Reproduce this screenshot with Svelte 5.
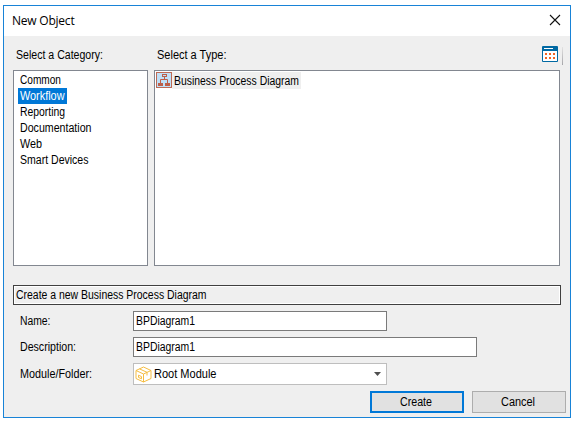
<script>
  const categories = [
    { name: 'Common', width: 41 },
    { name: 'Workflow', width: 44.5 },
    { name: 'Reporting', width: 45 },
    { name: 'Documentation', width: 71.5 },
    { name: 'Web', width: 22 },
    { name: 'Smart Devices', width: 68.5 }
  ];
  let selected = $state('Workflow');
</script>

{#snippet label(text, width)}
  <svg class="label" width={Math.ceil(width)} height="16">
    <text x="0" y="12" textLength={width} lengthAdjust="spacingAndGlyphs">{text}</text>
  </svg>
{/snippet}

<main>
  <div class="dialog">
    <header>
      <h1>New Object</h1>
      <svg class="close" width="12" height="12" viewBox="0 0 12 12">
        <path d="M1 1 11 11M11 1 1 11" stroke="#111" stroke-width="1.1" fill="none" />
      </svg>
    </header>

    <div class="toolbar">
      <div class="cat-label">{@render label('Select a Category:', 87)}</div>
      <div class="type-label">{@render label('Select a Type:', 69.5)}</div>
      <svg class="view" width="16" height="16" viewBox="0 0 16 16">
        <rect width="16" height="16" rx="1" fill="#0069a3" />
        <rect x="2" y="2" width="9" height="1" fill="#fff" />
        <rect x="1" y="5" width="14" height="10" fill="#fff" />
        <path d="M3 7h2v2H3zM7 7h2v2H7zM11 7h2v2h-2zM3 11h2v2H3zM7 11h2v2H7zM11 11h2v2h-2z" fill="#f26322" />
      </svg>
      <i class="divider"></i>
    </div>

    <div class="lists">
      <ul class="categories">
        {#each categories as c}
          <li class:selected={c.name === selected}>{@render label(c.name, c.width)}</li>
        {/each}
      </ul>
      <div class="types">
        <div class="type">
          <svg width="16" height="16" viewBox="0 0 16 16">
            <rect x=".5" y=".5" width="15" height="15" fill="#c0e0f7" stroke="#bd6a55" />
            <g fill="none" stroke="#bd5f49">
              <rect x="6.5" y="2.5" width="4" height="2" />
              <path d="M8.5 5v3M4.5 11V7.5h7V11" />
            </g>
            <path d="M2 11h5v3H2zM9 11h5v3H9z" fill="#bd5f49" />
          </svg>
          <div class="type-name">{@render label('Business Process Diagram', 125)}</div>
        </div>
      </div>
    </div>

    <div class="summary">{@render label('Create a new Business Process Diagram', 190.5)}</div>

    <div class="form">
      <div class="row">
        <span>{@render label('Name:', 30.5)}</span>
        <div class="field short">{@render label('BPDiagram1', 59)}</div>
      </div>
      <div class="row">
        <span>{@render label('Description:', 56)}</span>
        <div class="field long">{@render label('BPDiagram1', 59)}</div>
      </div>
      <div class="row combo-row">
        <span>{@render label('Module/Folder:', 72)}</span>
        <div class="combo">
          <svg class="box" width="17" height="17" viewBox="0 0 17 17" fill="none" stroke="#f5bd42" stroke-linejoin="round">
            <path d="M8.5 1 16 4.500V12.500L8.500 16 1 12.500V4.500ZM1 4.500 8.500 8 16 4.500M8.500 8V16M4.500 2.900 12 6.300V9.500M3.500 9.200 6.500 10.600V12.800L3.500 11.400Z" />
          </svg>
          {@render label('Root Module', 62.5)}
          <svg class="arrow" width="7" height="4" viewBox="0 0 7 4"><path d="M0 0h7L3.500 4z" fill="#505050" /></svg>
        </div>
      </div>
    </div>

    <footer>
      <button class="primary">{@render label('Create', 32)}</button>
      <button>{@render label('Cancel', 34)}</button>
    </footer>
  </div>
</main>

<style>
  :global(body) { background: #fff; }
  * { box-sizing: border-box; }
  main {
    width: 575px;
    height: 421px;
    padding: 5px 0 0 3px;
    font: 12px "Liberation Sans", Arial, sans-serif;
    color: #000;
  }
  svg { display: block; flex: none; }
  .label { overflow: visible; fill: currentColor; }
  .dialog {
    width: 568px;
    height: 413px;
    border: 1px solid #1883d7;
    background: #efefef;
    display: flex;
    flex-direction: column;
  }
  header {
    height: 30px;
    background: #fff;
    display: flex;
    justify-content: space-between;
    padding: 0 9px 0 8px;
  }
  h1 {
    margin: 0;
    font: 12px/29px "Open Sans", "Noto Sans", sans-serif;
    letter-spacing: -0.22px;
  }
  .close { margin-top: 8px; }
  .toolbar {
    height: 34px;
    display: flex;
    padding-left: 12px;
  }
  .cat-label { width: 141px; padding-top: 11px; }
  .type-label { width: 385px; padding-top: 11px; }
  .view { margin-top: 10px; }
  .divider { width: 1px; height: 18px; margin: 11px 0 0 4px; background: linear-gradient(#e2e2e2, #a6a6aa); }
  .lists { display: flex; gap: 6px; height: 196px; padding-left: 9px; }
  ul, .types { margin: 0; background: #fff; border: 1px solid #828790; }
  ul { width: 135px; padding: 1px 4px; list-style: none; }
  li { width: max-content; height: 16px; padding: 0 2px; }
  .selected { background: #0078d7; color: #fff; }
  .types { width: 406px; padding: 1px; }
  .type { display: flex; }
  .type-name { background: #efefef; width: 129px; height: 17px; padding: 1px 0 0 2px; }
  .summary {
    width: 548px;
    height: 20px;
    margin: 19px 0 0 9px;
    border: 1px solid #404040;
    box-shadow: inset 0 0 0 1px #fff;
    padding: 1px 2px;
  }
  .form { padding: 6px 0 0 16px; display: flex; flex-direction: column; gap: 6px; }
  .row { display: flex; height: 20px; }
  .row span { width: 113px; padding-top: 2px; }
  .field { background: #fff; border: 1px solid #7a7a7a; padding: 1px 2px; }
  .short { width: 254px; }
  .long { width: 344px; }
  .combo-row { height: 22px; }
  .combo-row span { padding-top: 3px; }
  .combo {
    width: 254px;
    background: #fff;
    border: 1px solid #bebebe;
    display: flex;
    align-items: flex-start;
    padding: 2px 5px 0 1px;
  }
  .box { margin-right: 2px; }
  .arrow { margin: 6px 0 0 auto; }
  footer { display: flex; justify-content: flex-end; gap: 8px; padding: 6px 4px 0 0; }
  button {
    width: 94px;
    height: 22px;
    padding: 0 2px 0 0;
    border: 1px solid #adadad;
    background: #e1e1e1;
    font: inherit;
    color: #000;
    display: flex;
    align-items: center;
    justify-content: center;
  }
  .primary { border: 2px solid #0078d7; }
</style>
